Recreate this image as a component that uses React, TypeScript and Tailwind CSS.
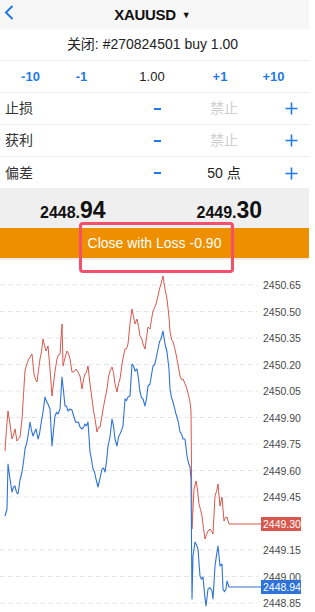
import React from 'react';

const FONT = { fontFamily: '"Liberation Sans", Arial, "Noto Sans CJK SC", sans-serif' };

// chart area starts at page y = 261
const TOP = 261;
const py = (p: number) => 286 + (2450.65 - p) * (26.5 / 0.15) - TOP;

const levels = [
  2450.65, 2450.5, 2450.35, 2450.2, 2450.05, 2449.9, 2449.75, 2449.6, 2449.45, 2449.15, 2449.0, 2448.85,
];

const redPts: [number, number][] = [
  [5, 452], [8, 412], [10, 425], [12, 440], [15, 430], [17, 442], [20, 438], [22, 420], [25, 372], [28, 362],
  [32, 355], [34, 375], [37, 383], [40, 360], [43, 340], [46, 352], [48, 347], [50, 370], [52, 397], [55, 372],
  [57, 360], [60, 355], [62, 325], [63, 367], [67, 352], [70, 360], [72, 373], [76, 370], [80, 377], [82, 390],
  [85, 375], [88, 367], [90, 385], [92, 400], [95, 420], [97, 433], [100, 428], [102, 417], [105, 400], [107, 390],
  [110, 372], [112, 368], [115, 385], [117, 393], [120, 380], [125, 350], [128, 345], [132, 310], [135, 325],
  [137, 320], [140, 337], [143, 345], [145, 350], [148, 328], [150, 330], [153, 312], [156, 305], [158, 297],
  [161, 285], [163, 277], [165, 290], [167, 300], [169, 318], [170, 333], [173, 343], [176, 355], [180, 377],
  [183, 380], [187, 390], [190, 403], [191, 412], [192, 530], [194, 490], [196, 482], [199, 505], [202, 517],
  [205, 540], [208, 532], [210, 530], [213, 535], [215, 497], [218, 485], [220, 507], [222, 498], [224, 522],
  [227, 518], [229, 525], [262, 525],
];

const bluePts: [number, number][] = [
  [5, 517], [7, 510], [8, 465], [10, 480], [12, 493], [15, 487], [18, 495], [22, 473], [25, 450], [28, 437],
  [30, 423], [33, 437], [36, 430], [38, 440], [41, 425], [43, 413], [45, 398], [48, 405], [50, 410], [52, 447],
  [55, 417], [58, 415], [60, 410], [62, 378], [65, 407], [68, 412], [70, 410], [74, 418], [77, 423], [80, 428],
  [82, 430], [85, 425], [88, 423], [90, 453], [93, 470], [96, 480], [98, 488], [102, 470], [105, 473], [108, 447],
  [110, 438], [112, 420], [115, 440], [117, 447], [120, 435], [123, 427], [125, 400], [128, 398], [130, 397],
  [132, 365], [135, 372], [137, 370], [140, 393], [143, 400], [145, 407], [148, 387], [150, 385], [153, 367],
  [156, 360], [158, 350], [161, 340], [163, 332], [165, 345], [167, 353], [169, 370], [170, 390], [173, 403],
  [176, 415], [180, 433], [183, 440], [185, 440], [187, 457], [190, 468], [191, 480], [192, 600], [193, 557],
  [195, 543], [198, 550], [200, 577], [203, 578], [206, 607], [208, 590], [212, 592], [213, 600], [215, 567],
  [218, 547], [220, 567], [222, 565], [223, 590], [226, 590], [227, 582], [229, 588], [262, 588],
];

// add a little jitter between key points so the line looks like tick data
function toPath(pts: [number, number][], seed: number) {
  const out: string[] = [];
  for (let i = 0; i < pts.length; i++) {
    const [x, y] = pts[i];
    out.push(`${x},${y - TOP}`);
    const next = pts[i + 1];
    if (next && next[0] - x >= 3 && next[0] < 240) {
      const mx = x + (next[0] - x) / 2;
      const n = Math.sin((mx + seed) * 12.9898) * 43758.5453;
      const j = (n - Math.floor(n) - 0.5) * 6;
      out.push(`${mx},${(y + next[1]) / 2 + j - TOP}`);
    }
  }
  return 'M' + out.join(' L');
}

function Chart() {
  return (
    <svg width="309" height="351" className="block" style={FONT}>
      {levels.map((l) => (
        <g key={l}>
          <line x1="0" x2="258" y1={py(l)} y2={py(l)} stroke="#e6e6e6" strokeWidth="1" strokeDasharray="5 3" />
          <text x="263" y={py(l) + 4} fontSize="10.5" fill="#4a4a4a">
            {l.toFixed(2)}
          </text>
        </g>
      ))}
      <path d={toPath(redPts, 3)} fill="none" stroke="#d9584d" strokeWidth="1" strokeLinejoin="round" />
      <path d={toPath(bluePts, 7)} fill="none" stroke="#2e73d8" strokeWidth="1.1" strokeLinejoin="round" />
      <rect x="261" y={525 - 7 - TOP} width="40" height="14" fill="#d9584d" />
      <text x="263" y={525 + 4 - TOP} fontSize="10.5" fill="#ffffff">2449.30</text>
      <rect x="261" y={588 - 7 - TOP} width="40" height="14" fill="#2e73d8" />
      <text x="263" y={588 + 4 - TOP} fontSize="10.5" fill="#ffffff">2448.94</text>
    </svg>
  );
}

function Minus() {
  return <span className="block w-[7px] h-[2px] bg-[#1f7ae6]" />;
}

function Plus() {
  return (
    <svg width="13" height="13" viewBox="0 0 13 13">
      <path d="M6.5 0.5v12M0.5 6.5h12" stroke="#1f7ae6" strokeWidth="1.6" />
    </svg>
  );
}

function ParamRow({ label, value, muted, last }: { label: string; value: string; muted?: boolean; last?: boolean }) {
  return (
    <div className={`h-8 grid grid-cols-[140px_34px_100px_35px] items-center ${last ? '' : 'border-b border-[#ececec]'}`}>
      <span className="pl-[5px] text-[14px] text-[#333]">{label}</span>
      <span className="flex justify-center">
        <Minus />
      </span>
      <span className={`text-center text-[14px] ${muted ? 'text-[#cfcfcf]' : 'text-[#222]'}`}>{value}</span>
      <span className="flex justify-center">
        <Plus />
      </span>
    </div>
  );
}

export default function App() {
  return (
    <div className="w-[309px] h-[612px] bg-white overflow-hidden relative" style={FONT}>
      {/* Header */}
      <div className="h-[29px] bg-[#f7f7f7] flex items-center relative">
        <svg className="absolute left-[4px] top-[5px]" width="10" height="15" viewBox="0 0 10 15">
          <path d="M8.5 1L2 7.5L8.5 14" fill="none" stroke="#1f7ae6" strokeWidth="2" />
        </svg>
        <div className="mx-auto flex items-center gap-[6px] pr-[4px] pt-[2px]">
          <span className="text-[15px] font-bold text-[#111] tracking-[-0.3px]">XAUUSD</span>
          <span className="text-[9px] text-[#111]">▼</span>
        </div>
      </div>

      <div className="h-8 flex items-center justify-center border-b border-[#ececec] text-[14px] text-[#222] pr-[4px]">
        关闭: #270824501 buy 1.00
      </div>

      <div className="h-8 grid grid-cols-[61px_41px_100px_36px_71px] items-center border-b border-[#ececec] text-[13px]">
        <span className="text-center font-bold text-[#1f7ae6]">-10</span>
        <span className="text-center font-bold text-[#1f7ae6]">-1</span>
        <span className="text-center text-[#222]">1.00</span>
        <span className="text-center font-bold text-[#1f7ae6]">+1</span>
        <span className="text-center font-bold text-[#1f7ae6]">+10</span>
      </div>

      <ParamRow label="止损" value="禁止" muted />
      <ParamRow label="获利" value="禁止" muted />
      <ParamRow label="偏差" value="50 点" last />

      {/* Prices */}
      <div className="h-[40px] mt-[-1px] bg-[#efefef] grid grid-cols-2 items-end pb-[6px] font-bold text-[#111]">
        <div className="pl-[40px] leading-none">
          <span className="text-[16px]">2448.</span>
          <span className="text-[23px]">94</span>
        </div>
        <div className="pl-[42px] leading-none">
          <span className="text-[16px]">2449.</span>
          <span className="text-[23px]">30</span>
        </div>
      </div>

      <div className="h-[30px] bg-[#ee8f00] flex items-center justify-center text-white text-[14px]">
        Close with Loss -0.90
      </div>
      <div className="h-[2px] bg-[#ececec]" />

      <Chart />

      {/* annotation box */}
      <div className="absolute left-[79px] top-[222px] w-[155px] h-[51px] border-[3px] border-[#f5506a] rounded-[4px]" />
    </div>
  );
}
